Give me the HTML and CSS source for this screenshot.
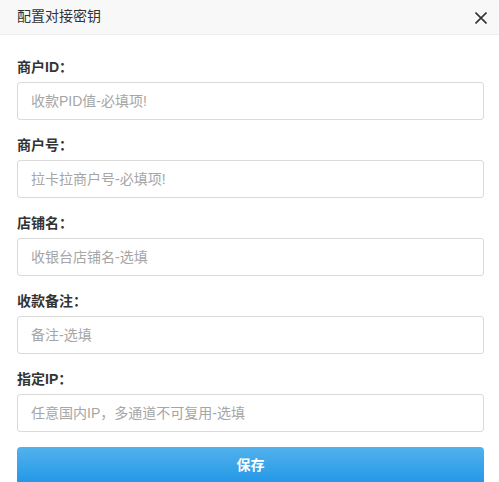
FILE: index.html
```html
<!DOCTYPE html>
<html lang="zh">
<head>
<meta charset="utf-8">
<link rel="stylesheet" href="styles.css">
</head>
<body>
<div class="dialog">
  <div class="header">
    <span class="title">配置对接密钥</span>
    <svg class="close" width="12" height="12" viewBox="0 0 12 12"><path d="M0.5 0.5L11.5 11.5M11.5 0.5L0.5 11.5" stroke="#333" stroke-width="1.6" fill="none"/></svg>
  </div>
  <form class="body">
    <div class="field">
      <label class="label">商户ID：</label>
      <input class="input" type="text" placeholder="收款PID值-必填项!">
    </div>
    <div class="field">
      <label class="label">商户号：</label>
      <input class="input" type="text" placeholder="拉卡拉商户号-必填项!">
    </div>
    <div class="field">
      <label class="label">店铺名：</label>
      <input class="input" type="text" placeholder="收银台店铺名-选填">
    </div>
    <div class="field">
      <label class="label">收款备注：</label>
      <input class="input" type="text" placeholder="备注-选填">
    </div>
    <div class="field">
      <label class="label">指定IP：</label>
      <input class="input" type="text" placeholder="任意国内IP，多通道不可复用-选填">
    </div>
    <button class="save" type="button">保存</button>
  </form>
</div>
</body>
</html>
```
FILE: styles.css
```css
html, body {
  margin: 0;
  padding: 0;
  background: #fff;
}
body {
  font-family: "Liberation Sans", "Noto Sans CJK SC", sans-serif;
  font-size: 14px;
  color: #333;
}
.dialog {
  width: 499px;
}
.header {
  height: 35px;
  background: #f8f8f8;
  border-bottom: 1px solid #eee;
  display: flex;
  align-items: center;
  justify-content: space-between;
  padding: 0 12px 0 17px;
  box-sizing: border-box;
}
.title {
  font-size: 14px;
  color: #333;
  line-height: 20px;
  margin-top: -3px;
}
.close {
  display: block;
  margin-top: 1px;
}
.body {
  padding: 22px 15px 0 17px;
  display: flex;
  flex-direction: column;
}
.field {
  display: flex;
  flex-direction: column;
  margin-bottom: 15px;
}
.label {
  font-weight: bold;
  line-height: 20px;
  height: 20px;
  margin-bottom: 5px;
  color: #333;
}
.input {
  height: 38px;
  box-sizing: border-box;
  border: 1px solid #dadada;
  border-radius: 3px;
  padding: 0 13px;
  font-family: inherit;
  font-size: 14px;
  color: #333;
  outline: none;
  margin: 0;
}
.input::placeholder {
  color: #a6a6a6;
}
.save {
  height: 38px;
  border: none;
  border-radius: 4px;
  background: linear-gradient(to bottom, #52b2ec, #2196e6);
  color: #fff;
  font-family: inherit;
  font-size: 14px;
  font-weight: bold;
  margin: 0;
  padding: 0 0 4px 0;
}
```
